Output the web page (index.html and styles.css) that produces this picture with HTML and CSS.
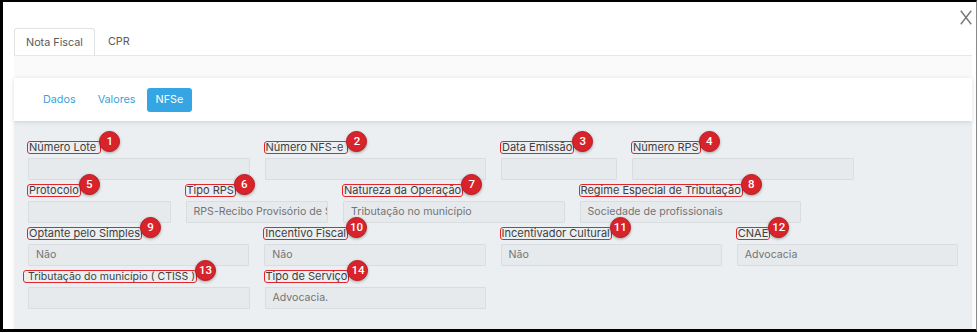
FILE: index.html
```html
<!DOCTYPE html>
<html lang="pt-BR">
<head>
<meta charset="utf-8">
<title>Nota Fiscal - NFSe</title>
<link rel="stylesheet" href="styles.css">
</head>
<body>
<div class="frame">
  <button class="close" aria-label="Fechar">
    <svg width="12" height="15" viewBox="0 0 12 15"><path d="M0.8 0.8 L11.2 14.2 M11.2 0.8 L0.8 14.2" stroke="#777" stroke-width="1.4" fill="none"/></svg>
  </button>
  <div class="tabs">
    <div class="tab active">Nota Fiscal</div>
    <div class="tab">CPR</div>
  </div>
  <div class="panel">
    <nav class="pills">
      <a class="pill">Dados</a>
      <a class="pill">Valores</a>
      <a class="pill active">NFSe</a>
    </nav>
    <div class="form">
      <div class="row">
        <div class="field c3"><div class="lbl"><span class="tag">Número Lote <span class="badge">1</span></span></div><div class="input"></div></div>
        <div class="field c3"><div class="lbl"><span class="tag">Número NFS-e <span class="badge">2</span></span></div><div class="input"></div></div>
        <div class="field cd"><div class="lbl"><span class="tag">Data Emissão<span class="badge">3</span></span></div><div class="input"></div></div>
        <div class="field c3"><div class="lbl"><span class="tag">Número RPS<span class="badge">4</span></span></div><div class="input"></div></div>
      </div>
      <div class="row">
        <div class="field c2"><div class="lbl"><span class="tag">Protocolo<span class="badge">5</span></span></div><div class="input"></div></div>
        <div class="field c2"><div class="lbl"><span class="tag">Tipo RPS<span class="badge">6</span></span></div><div class="input">RPS-Recibo Provisório de Serviços</div></div>
        <div class="field c3"><div class="lbl"><span class="tag">Natureza da Operação<span class="badge">7</span></span></div><div class="input">Tributação no município</div></div>
        <div class="field c3"><div class="lbl"><span class="tag">Regime Especial de Tributação<span class="badge">8</span></span></div><div class="input">Sociedade de profissionais</div></div>
      </div>
      <div class="row">
        <div class="field c3"><div class="lbl"><span class="tag">Optante pelo Simples<span class="badge">9</span></span></div><div class="input">Não</div></div>
        <div class="field c3"><div class="lbl"><span class="tag">Incentivo Fiscal<span class="badge">10</span></span></div><div class="input">Não</div></div>
        <div class="field c3"><div class="lbl"><span class="tag">Incentivador Cultural<span class="badge">11</span></span></div><div class="input">Não</div></div>
        <div class="field c3"><div class="lbl"><span class="tag">CNAE<span class="badge">12</span></span></div><div class="input">Advocacia</div></div>
      </div>
      <div class="row">
        <div class="field c3"><div class="lbl"><span class="tag wide">Tributação do município ( CTISS )<span class="badge">13</span></span></div><div class="input"></div></div>
        <div class="field c3"><div class="lbl"><span class="tag">Tipo de Serviço<span class="badge">14</span></span></div><div class="input">Advocacia.</div></div>
      </div>
    </div>
  </div>
</div>
</body>
</html>
```

FILE: styles.css
```css
* { box-sizing: border-box; }
html, body { margin: 0; padding: 0; background: #fff; }
body { font-family: "Inter", "Open Sans", sans-serif; }

.frame {
  position: relative;
  width: 977px;
  height: 332px;
  border-top: 2px solid #000;
  border-left: 3px solid #000;
  border-bottom: 3px solid #000;
  border-right: 1px solid #8a8a8a;
  padding: 26px 4px 0 11px;
  background: #fff;
  display: flex;
  flex-direction: column;
}

.close {
  position: absolute;
  top: 8px;
  right: 4px;
  border: 0;
  background: none;
  padding: 0;
  line-height: 0;
}

.tabs {
  display: flex;
  height: 28px;
  border-bottom: 1px solid #e8e8e8;
}
.tab {
  height: 27px;
  padding: 0 13px;
  font-size: 10.8px;
  line-height: 27px;
  color: #5a5a5a;
  white-space: nowrap;
}
.tab.active {
  border: 1px solid #e0e3e6;
  border-bottom: 0;
  border-radius: 3px 3px 0 0;
  padding: 0 11px;
  background: #fff;
}

.panel {
  flex: 1;
  display: flex;
  flex-direction: column;
  background: #fafafa;
  padding-top: 22px;
}

.pills {
  height: 43px;
  background: #fff;
  display: flex;
  align-items: center;
  padding-left: 18px;
  box-shadow: 0 1px 5px rgba(0,0,0,0.13);
  position: relative;
  z-index: 1;
}
.pill {
  font-size: 10.8px;
  color: #3f9fdc;
  padding: 0 11px;
  height: 24px;
  line-height: 24px;
  border-radius: 3px;
}
.pill.active {
  background: #35a6e3;
  color: #fff;
  padding: 0 9px;
}

.form {
  flex: 1;
  background: #eceff1;
  padding: 16px 14px 0 14px;
  box-shadow: 0 0 6px rgba(0,0,0,0.06);
}

.row {
  display: flex;
  gap: 15px;
}
.c3 { width: 221.5px; }
.c2 { width: 142.5px; }
.cd { width: 116px; }

.lbl {
  height: 21px;
  padding-top: 4px;
  font-size: 11px;
  line-height: 12px;
  display: flex;
  align-items: flex-start;
}
.tag {
  position: relative;
  display: block;
  font-size: 11px;
  line-height: 11px;
  color: #404040;
  border: 1.5px solid #e2252c;
  border-radius: 3px;
  padding: 0 1px;
  margin-left: -1px;
  white-space: pre;
}
.tag.wide { margin-left: -5px; padding-left: 4px; font-size: 10.5px; }

.badge {
  position: absolute;
  left: calc(100% - 1px);
  top: -11px;
  width: 21px;
  height: 21px;
  border-radius: 50%;
  background: #d8232a;
  border: 1px solid #b81b21;
  color: #fff;
  font-family: "Roboto", "Liberation Sans", sans-serif;
  font-weight: 500;
  font-size: 11.5px;
  line-height: 19px;
  text-align: center;
  box-shadow: 0 1px 3px rgba(0,0,0,0.35);
}

.input {
  height: 22px;
  background: #e7eaed;
  border: 1px solid #d9dde0;
  border-radius: 1px;
  font-size: 10.6px;
  line-height: 20px;
  color: #747474;
  padding: 0 7px;
  white-space: nowrap;
  overflow: hidden;
}
```
